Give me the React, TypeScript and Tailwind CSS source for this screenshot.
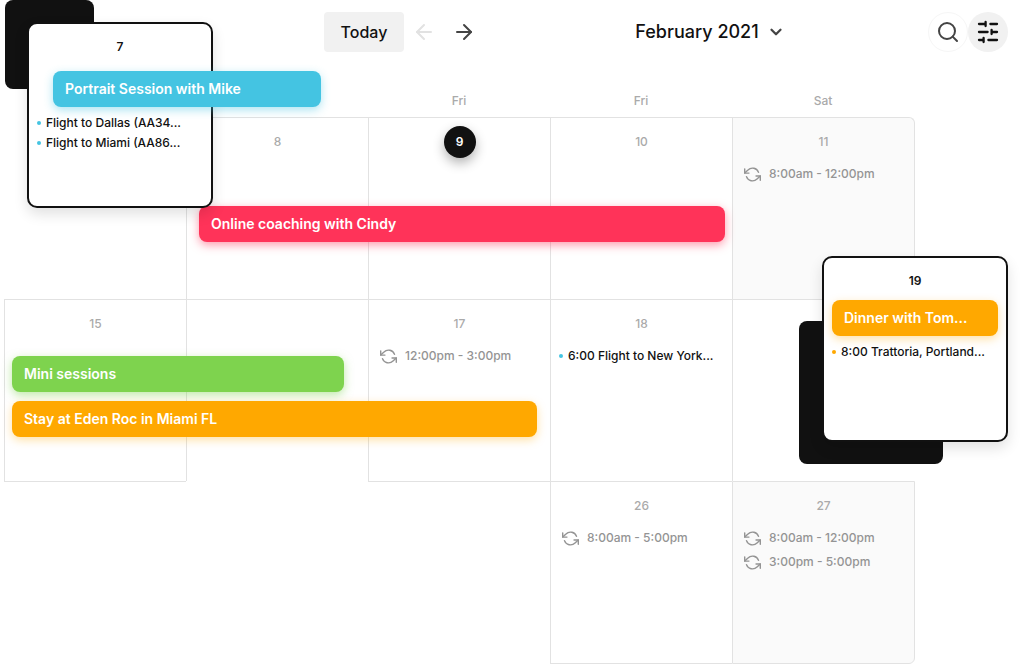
import React, {useState} from 'react';
import {FiArrowLeft, FiArrowRight, FiChevronDown, FiRefreshCcw} from "react-icons/fi";
import {Search} from "lucide-react";

interface BarInterface {
    label: string;
    className: string;
}

interface ItemInterface {
    label: string;
    dot: string;
}

interface DayInterface {
    id: string;
    day?: string;
    today?: boolean;
    className?: string;
    slots?: string[];
    items?: ItemInterface[];
    bars?: BarInterface[];
    card?: React.ReactNode;
}

const BLUE = "bg-[#44c4e2] shadow-[0_3px_10px_rgba(68,196,226,0.45)]";
const RED = "bg-[#ff3359] shadow-[0_3px_10px_rgba(255,51,89,0.5)]";
const GREEN = "bg-[#7ed34e] shadow-[0_3px_10px_rgba(126,211,78,0.5)]";
const ORANGE = "bg-[#ffa800] shadow-[0_3px_10px_rgba(255,168,0,0.35)]";

const months = ["January 2021", "February 2021", "March 2021"];
const weekdays = ["", "", "Fri", "Fri", "Sat"];

function SlidersIcon() {
    return (
        <svg width="24" height="24" viewBox="0 0 24 24" fill="none" stroke="#111" strokeWidth="2.3"
             strokeLinecap="round" aria-hidden="true">
            <path d="M3 4h6.6M9.6 1.9v4.2M14.4 4H21"/>
            <path d="M3 12h8.6M15.6 9.9v4.2M15.6 12H21"/>
            <path d="M3 20h4.6M7.6 17.9v4.2M12.4 20H21"/>
        </svg>
    );
}

function EventBar({label, className}: BarInterface) {
    return (
        <div
            className={`relative z-10 flex h-9 shrink-0 items-center rounded-lg px-3 text-sm font-semibold whitespace-nowrap text-white ${className}`}>
            {label}
        </div>
    );
}

function EventItem({label, dot}: ItemInterface) {
    return (
        <li className="flex h-5 items-center gap-[5px] px-2 text-xs font-medium whitespace-nowrap text-[#111]">
            <span className={`size-1 shrink-0 rounded-full ${dot}`}/>{label}
        </li>
    );
}

function DayCard({day, className, children}: { day: string, className: string, children: React.ReactNode }) {
    return (
        <div
            className={`absolute z-20 flex size-[186px] flex-col rounded-[10px] border-2 border-[#111] bg-white pt-[15px] shadow-[0_6px_14px_rgba(0,0,0,0.12)] ${className}`}>
            <span className="text-center text-xs leading-4 font-semibold text-[#111]">{day}</span>
            {children}
        </div>
    );
}

const days: DayInterface[] = [
    {
        id: "7",
        card: <>
            <div className="absolute -top-[117px] left-px size-[89px] rounded-lg bg-[#111]"/>
            <DayCard day="7" className="-top-[95px] left-[23px]">
                <EventBar label="Portrait Session with Mike" className={`mt-4 ml-6 w-[268px] ${BLUE}`}/>
                <ul className="mt-[6px]">
                    <EventItem label="Flight to Dallas (AA34..." dot="bg-[#44c4e2]"/>
                    <EventItem label="Flight to Miami (AA86..." dot="bg-[#44c4e2]"/>
                </ul>
            </DayCard>
        </>
    },
    {
        id: "8", day: "8", className: "border-t border-l",
        bars: [{label: "Online coaching with Cindy", className: `mt-14 ml-3 w-[calc(300%-17px)] ${RED}`}]
    },
    {id: "9", day: "9", today: true, className: "border-t border-l"},
    {id: "10", day: "10", className: "border-t border-l"},
    {
        id: "11", day: "11", className: "-mr-px border-t border-x rounded-tr-md bg-[#fafafa]",
        slots: ["8:00am - 12:00pm"]
    },
    {
        id: "15", day: "15", className: "-mb-px border-y border-l",
        bars: [
            {label: "Mini sessions", className: `mt-6 ml-[7px] w-[calc(200%-30px)] ${GREEN}`},
            {label: "Stay at Eden Roc in Miami FL", className: `mt-[9px] ml-[7px] w-[calc(300%-18px)] ${ORANGE}`}
        ]
    },
    {id: "16", className: "border-t border-l"},
    {id: "17", day: "17", className: "-mb-px border-y border-l", slots: ["12:00pm - 3:00pm"]},
    {
        id: "18", day: "18", className: "border-t border-l",
        items: [{label: "6:00 Flight to New York...", dot: "bg-[#44c4e2]"}]
    },
    {
        id: "19", className: "border-t border-l",
        card: <>
            <div className="absolute top-[21px] left-[66px] h-[143px] w-36 rounded-lg bg-[#111]"/>
            <DayCard day="19" className="-top-11 left-[89px]">
                <EventBar label="Dinner with Tom..." className={`mx-2 mt-[11px] ${ORANGE}`}/>
                <ul className="mt-[6px]">
                    <EventItem label="8:00 Trattoria, Portland..." dot="bg-[#ffa800]"/>
                </ul>
            </DayCard>
        </>
    },
    {id: "22"},
    {id: "23"},
    {id: "24"},
    {id: "26", day: "26", className: "-mb-px border-y border-l", slots: ["8:00am - 5:00pm"]},
    {
        id: "27", day: "27", className: "-mr-px -mb-px border rounded-br-md bg-[#fafafa]",
        slots: ["8:00am - 12:00pm", "3:00pm - 5:00pm"]
    },
];

function DayCell({data}: { data: DayInterface }) {
    return (
        <div className={`relative flex flex-col border-[#e2e2e2] ${data.className ?? ""}`}>
            {data.day && (
                <div className="mt-4 flex h-4 items-center justify-center text-xs font-medium text-[#aaa]">
                    {data.today
                        ? <span
                            className="flex size-8 shrink-0 items-center justify-center rounded-full bg-[#111] font-semibold text-white shadow-[0_5px_12px_rgba(0,0,0,0.3)]">{data.day}</span>
                        : data.day}
                </div>
            )}
            {data.slots && (
                <ul className="mt-3">
                    {data.slots.map((slot) => (
                        <li key={slot}
                            className="flex h-6 items-center gap-2 px-[11px] text-xs font-medium whitespace-nowrap text-[#949494]">
                            <FiRefreshCcw size={17} className="shrink-0"/>{slot}
                        </li>
                    ))}
                </ul>
            )}
            {data.items && (
                <ul className="mt-[14px]">
                    {data.items.map((item) => <EventItem key={item.label} {...item}/>)}
                </ul>
            )}
            {data.bars?.map((bar) => <EventBar key={bar.label} {...bar}/>)}
            {data.card}
        </div>
    );
}

function App() {

    const [month, setMonth] = useState("February 2021");

    return (
        <div className="w-full overflow-hidden bg-white font-['Inter',sans-serif]">
            <header className="flex items-center justify-between pt-3 pr-4 pl-[324px] text-[#111]">
                <div className="flex items-center">
                    <button type="button" className="h-10 w-20 rounded bg-[#f1f1f1] font-medium">Today</button>
                    <button type="button" aria-label="Previous"
                            className="flex size-10 items-center justify-center text-[#e2e2e2]">
                        <FiArrowLeft size={24}/>
                    </button>
                    <button type="button" aria-label="Next"
                            className="flex size-10 items-center justify-center text-[#444]">
                        <FiArrowRight size={24}/>
                    </button>
                </div>
                <div className="flex items-center gap-2 pl-2">
                    <select aria-label="Month" value={month} onChange={(e) => setMonth(e.target.value)}
                            className="appearance-none field-sizing-content bg-transparent text-lg font-medium">
                        {months.map((name) => <option key={name}>{name}</option>)}
                    </select>
                    <FiChevronDown size={18} strokeWidth={3} className="pointer-events-none text-[#444]"/>
                </div>
                <div className="flex items-center">
                    <button type="button" aria-label="Search"
                            className="flex size-10 items-center justify-center rounded-full border border-[#f6f6f6] text-[#444]">
                        <Search size={24}/>
                    </button>
                    <button type="button" aria-label="Filters"
                            className="flex size-10 items-center justify-center rounded-full bg-[#f1f1f1]">
                        <SlidersIcon/>
                    </button>
                </div>
            </header>
            <main className="mr-[110px] ml-1">
                <div className="grid grid-cols-5 pt-[41px] pb-2 text-center text-xs leading-4 font-medium text-[#aaa]">
                    {weekdays.map((name, index) => <span key={index}>{name}</span>)}
                </div>
                <div className="grid auto-rows-[minmax(182px,auto)] grid-cols-5 pb-px">
                    {days.map((data) => <DayCell key={data.id} data={data}/>)}
                </div>
            </main>
        </div>
    );
}

export default App;
